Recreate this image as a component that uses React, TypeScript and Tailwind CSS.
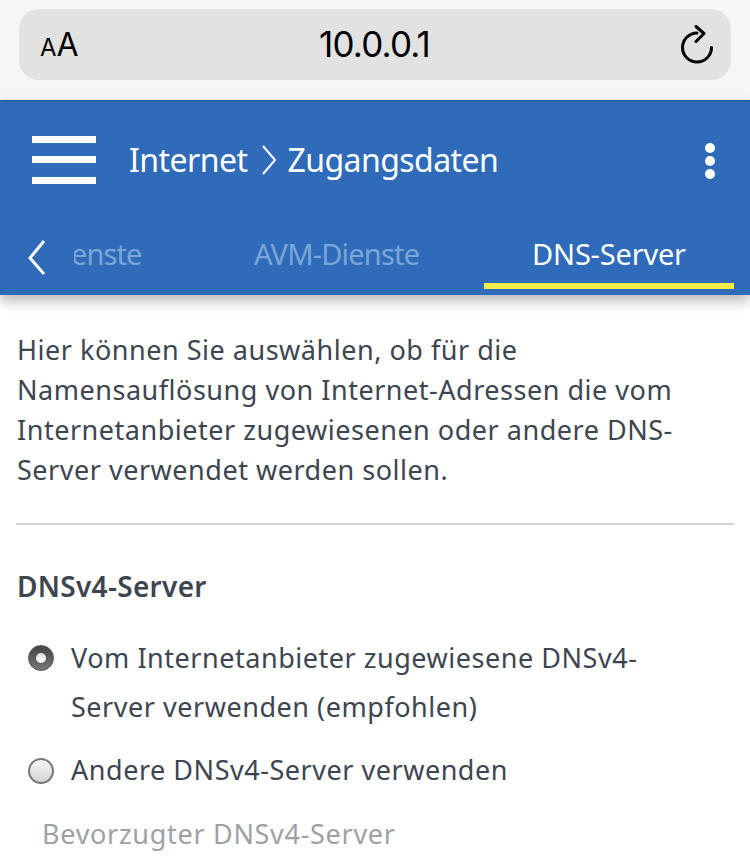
import React from "react";

const App: React.FC = () => {
  return (
    <div className="w-[750px] h-[866px] overflow-hidden bg-white font-['Noto_Sans',sans-serif]">
      {/* safari bar */}
      <div className="h-[100px] bg-[#f6f6f6] px-[19px] pt-[9px]">
        <div className="h-[71px] rounded-[20px] bg-[#e2e2e2] flex items-center justify-between pl-[21px] pr-[17px] font-['Inter',sans-serif] text-black">
          <div className="w-[60px] flex items-baseline text-[32px] leading-none">
            <span className="text-[24px]">A</span>
            <span>A</span>
          </div>
          <div className="mr-[5px] text-[35px] tracking-[-0.8px] leading-none">10.0.0.1</div>
          <div className="w-[60px] flex justify-end">
            <svg width="36" height="40" viewBox="0 0 36 40" fill="none" stroke="black" strokeWidth="3" strokeLinecap="round" strokeLinejoin="round">
              <path d="M19 8a14.5 14.5 0 1 0 14.5 14.5" />
              <path d="M18 1.5l8 7-8 8" />
            </svg>
          </div>
        </div>
      </div>

      {/* blue header */}
      <div className="relative h-[195px] bg-[#2f6bb9] border-t border-[#22579b] shadow-[0_6px_12px_rgba(0,0,0,0.28)] text-white">
        <div className="h-[119px] flex items-center pl-[32px] pr-[35px]">
          <div className="w-[64px] flex flex-col gap-[13.5px] -translate-y-px">
            <div className="h-[7px] bg-white" />
            <div className="h-[7px] bg-white" />
            <div className="h-[7px] bg-white" />
          </div>
          <div className="ml-[33px] flex items-center text-[32px] leading-none tracking-[-0.55px] -translate-y-px">
            <span>Internet</span>
            <svg className="ml-[14px] mr-[10px]" width="16" height="40" viewBox="0 0 16 40" fill="none" stroke="white" strokeWidth="2">
              <path d="M2 6l12 14L2 34" />
            </svg>
            <span>Zugangsdaten</span>
          </div>
          <div className="ml-auto flex flex-col gap-[3px]">
            <div className="size-[10px] rounded-full bg-white" />
            <div className="size-[10px] rounded-full bg-white" />
            <div className="size-[10px] rounded-full bg-white" />
          </div>
        </div>
        <div className="flex h-[75px] items-start text-[29px] leading-none">
          <div className="w-[74px] pl-[27px] pt-[20px]">
            <svg width="20" height="36" viewBox="0 0 20 36" fill="none" stroke="white" strokeWidth="3">
              <path d="M17 1L3 18l14 16" />
            </svg>
          </div>
          <div className="w-[180px] overflow-hidden pt-[19px] text-[#7ba6d8] tracking-[-0.9px]">
            <span className="-ml-[3px] block">enste</span>
          </div>
          <div className="w-[230px] pt-[19px] text-[#7ba6d8] tracking-[-0.8px]">AVM-Dienste</div>
          <div className="w-[250px] h-[75px] relative text-center pt-[19px] tracking-[-0.2px]">
            DNS-Server
            <div className="absolute left-0 right-0 bottom-[6px] h-[6px] bg-[#f6ea4a]" />
          </div>
        </div>
      </div>

      {/* content */}
      <div className="px-[17px] text-[#3d4550]">
        <p className="pt-[35px] text-[27px] leading-[40px] tracking-[0.52px] whitespace-nowrap">
          Hier können Sie auswählen, ob für die
          <br />
          Namensauflösung von Internet-Adressen die vom
          <br />
          Internetanbieter zugewiesenen oder andere DNS-
          <br />
          Server verwendet werden sollen.
        </p>
        <div className="mt-[33px] -mx-px h-[2px] bg-[#d4d4d4]" />
        <h2 className="mt-[41px] text-[28px] leading-[40px] font-semibold tracking-[0.3px]">DNSv4-Server</h2>

        <div className="mt-[27px] flex items-start pl-[11px]">
          <div className="mt-[12px] size-[26px] shrink-0 rounded-full bg-gradient-to-b from-[#444] to-[#777] border border-[#555] flex items-center justify-center">
            <div className="size-[10px] rounded-full bg-gradient-to-b from-[#ddd] to-white" />
          </div>
          <div className="ml-[17px] text-[27px] leading-[49px] tracking-[0.53px] whitespace-nowrap">
            Vom Internetanbieter zugewiesene DNSv4-
            <br />
            Server verwenden (empfohlen)
          </div>
        </div>

        <div className="mt-[15px] flex items-start pl-[11px]">
          <div className="mt-[12px] size-[26px] shrink-0 rounded-full bg-gradient-to-b from-[#f5f5f5] to-[#d4d4d4] border-2 border-[#777]" />
          <div className="ml-[17px] text-[27px] leading-[48px] tracking-[0.53px] whitespace-nowrap">
            Andere DNSv4-Server verwenden
          </div>
        </div>

        <div className="mt-[16px] pl-[25px] text-[27px] leading-[48px] tracking-[0.7px] text-[#9da1a6]">
          Bevorzugter DNSv4-Server
        </div>
      </div>
    </div>
  );
};

export default App;
